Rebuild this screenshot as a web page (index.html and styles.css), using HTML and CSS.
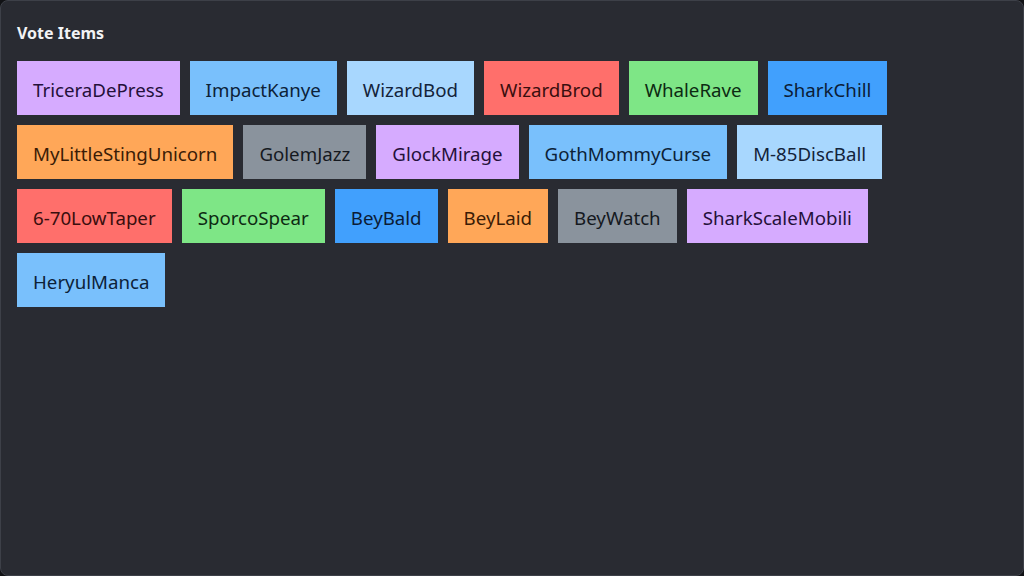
FILE: index.html
```html
<!DOCTYPE html>
<html lang="en">
<head>
<meta charset="utf-8">
<title>Vote Items</title>
<link rel="stylesheet" href="styles.css">
</head>
<body>
<div class="panel">
  <h2 class="title">Vote Items</h2>
  <div class="items">
    <div class="item purple">TriceraDePress</div>
    <div class="item sky">ImpactKanye</div>
    <div class="item pale">WizardBod</div>
    <div class="item red">WizardBrod</div>
    <div class="item green">WhaleRave</div>
    <div class="item blue">SharkChill</div>
    <div class="item orange">MyLittleStingUnicorn</div>
    <div class="item gray">GolemJazz</div>
    <div class="item purple">GlockMirage</div>
    <div class="item sky">GothMommyCurse</div>
    <div class="item pale">M-85DiscBall</div>
    <div class="item red">6-70LowTaper</div>
    <div class="item green">SporcoSpear</div>
    <div class="item blue">BeyBald</div>
    <div class="item orange">BeyLaid</div>
    <div class="item gray">BeyWatch</div>
    <div class="item purple">SharkScaleMobili</div>
    <div class="item sky">HeryulManca</div>
  </div>
</div>
</body>
</html>
```
FILE: styles.css
```css
html, body {
  margin: 0;
  padding: 0;
  background: #111215;
}
body {
  width: 1024px;
  height: 576px;
  font-family: "Noto Sans", "Open Sans", sans-serif;
}
.panel {
  box-sizing: border-box;
  width: 1024px;
  height: 576px;
  background: #292b32;
  border: 1px solid #3d4048;
  border-radius: 8px;
  padding: 19px 16px 16px 16px;
}
.title {
  margin: 0 0 15px 0;
  font-size: 16px;
  line-height: 26px;
  font-weight: 700;
  color: #f2f3f5;
}
.items {
  display: flex;
  flex-wrap: wrap;
  gap: 10px;
}
.item {
  box-sizing: border-box;
  height: 54px;
  padding: 3px 16px 0 16px;
  display: flex;
  align-items: center;
  font-size: 18.7px;
  color: rgba(10, 12, 20, 0.88);
}
.purple { background: #d6abff; color: #24103a; }
.sky { background: #79c0fc; color: #0c2238; }
.pale { background: #a8d7fe; color: #13233a; }
.red { background: #ff6f6b; color: #3a0e0e; }
.green { background: #7ee686; color: #0d2a12; }
.blue { background: #41a0fd; color: #0b1c36; }
.orange { background: #ffa758; color: #3a1c06; }
.gray { background: #8a939d; color: #15191f; }
```
